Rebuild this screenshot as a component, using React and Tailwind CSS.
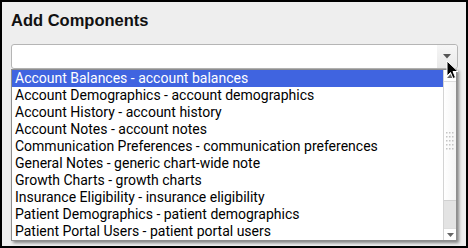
import React from "react";

const items = [
  "Account Balances - account balances",
  "Account Demographics - account demographics",
  "Account History - account history",
  "Account Notes - account notes",
  "Communication Preferences - communication preferences",
  "General Notes - generic chart-wide note",
  "Growth Charts - growth charts",
  "Insurance Eligibility - insurance eligibility",
  "Patient Demographics - patient demographics",
  "Patient Portal Users - patient portal users",
];

function Grip() {
  const dots = [];
  for (let r = 0; r < 5; r++) {
    for (let c = 0; c < 3; c++) {
      dots.push(<rect key={`${r}-${c}`} x={c * 3} y={r * 4} width="1.5" height="1.5" fill="#c4c4c4" />);
    }
  }
  return (
    <svg width="9" height="19" viewBox="0 0 9 19">
      {dots}
    </svg>
  );
}

export default function App() {
  return (
    <div className="relative w-[468px] h-[248px] border-2 border-black bg-[#eeeeee] overflow-hidden font-['Roboto',sans-serif]">
      <div className="pl-[9px] pt-2">
        <h2 className="text-[16.5px] leading-[20px] font-bold font-['Liberation_Sans',sans-serif] text-[#111]">
          Add Components
        </h2>
        <div className="relative mt-[14px] w-[447px]">
          <div className="h-[25px] rounded-[3px] border border-[#b5b5b5] bg-white flex justify-end">
            <div className="w-[20px] rounded-r-[3px] bg-gradient-to-b from-[#f6f6f6] to-[#e9e9e9] flex items-center justify-center">
              <svg width="8" height="5" viewBox="0 0 8 5">
                <path d="M0 0 H8 L4 4.5 Z" fill="#555" />
              </svg>
            </div>
          </div>

          {/* open dropdown list */}
          <div className="absolute left-0 top-[25px] w-[446px] h-[172px] border border-[#8e8e8e] bg-white flex shadow-[2px_2px_3px_rgba(0,0,0,0.45)]">
            <ul className="flex-1 text-[14px] leading-[17px] text-black">
              {items.map((item, i) => (
                <li
                  key={item}
                  className={`h-[17px] pl-[3px] whitespace-nowrap ${
                    i === 0 ? "bg-[#4064e0] text-white" : ""
                  }`}
                >
                  {item}
                </li>
              ))}
            </ul>
            <div className="w-[13px] border-l border-[#d4d4d4] bg-[#e3e3e3] flex flex-col">
              <div className="h-[12px] bg-white border-b border-[#dddddd] flex items-center justify-center">
                <svg width="7" height="4" viewBox="0 0 7 4">
                  <path d="M0 4 H7 L3.5 0 Z" fill="#666" />
                </svg>
              </div>
              <div className="h-[119px] bg-gradient-to-r from-white to-[#f4f4f4] border-b border-[#d0d0d0] flex items-center justify-center">
                <Grip />
              </div>
              <div className="flex-1" />
              <div className="h-[12px] bg-white border-t border-[#dddddd] flex items-center justify-center">
                <svg width="7" height="4" viewBox="0 0 7 4">
                  <path d="M0 0 H7 L3.5 4 Z" fill="#666" />
                </svg>
              </div>
            </div>
          </div>
        </div>
      </div>

      {/* mouse pointer */}
      <svg className="absolute left-[444px] top-[58px]" width="13" height="20" viewBox="0 0 13 20">
        <path d="M1 1 L1 16 L4.5 12.5 L7 18.5 L9.5 17.5 L7 11.5 L12 11.5 Z" fill="#000" stroke="#fff" strokeWidth="1" strokeLinejoin="round" />
      </svg>
    </div>
  );
}
